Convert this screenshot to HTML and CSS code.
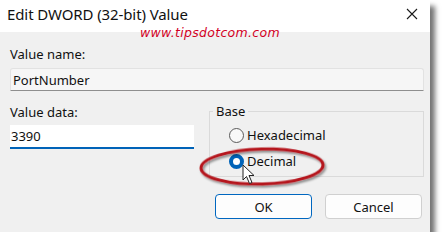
FILE: index.html
```html
<!DOCTYPE html>
<html>
<head>
<meta charset="utf-8">
<link rel="stylesheet" href="styles.css">
</head>
<body>
<div class="dialog">
  <div class="titlebar">
    <span class="title">Edit DWORD (32-bit) Value</span>
    <svg class="close" width="12" height="12" viewBox="0 0 12 12"><path d="M1 1 L11 11 M11 1 L1 11" stroke="#1a1a1a" stroke-width="1.1" fill="none"/></svg>
  </div>
  <div class="content">
    <div class="label first">Value name:</div>
    <div class="field readonly">PortNumber</div>
    <div class="row">
      <div class="col-left">
        <div class="label">Value data:</div>
        <div class="field edit">3390</div>
      </div>
      <fieldset class="group">
        <legend>Base</legend>
        <div class="radio"><span class="dot"></span><span>Hexadecimal</span></div>
        <div class="radio"><span class="dot on"></span><span>Decimal</span></div>
      </fieldset>
    </div>
    <div class="buttons">
      <div class="btn default">OK</div>
      <div class="btn">Cancel</div>
    </div>
  </div>
  <div class="watermark">www.tipsdotcom.com</div>
  <svg class="ellipse" width="140" height="52" viewBox="0 0 140 52">
    <defs>
      <filter id="sh" x="-10%" y="-20%" width="130%" height="160%">
        <feDropShadow dx="1.5" dy="2" stdDeviation="1.2" flood-color="#000" flood-opacity="0.45"/>
      </filter>
    </defs>
    <ellipse cx="69" cy="25.5" rx="61" ry="17.5" transform="rotate(-1.5 69 25.5)" fill="none" stroke="#b5121b" stroke-width="3" filter="url(#sh)"/>
  </svg>
  <svg class="cursor" width="14" height="22" viewBox="0 0 14 22">
    <path d="M1 1 L1 16 L4.5 12.5 L7.5 19.5 L10 18.5 L7 11.5 L12 11.5 Z" fill="#fff" stroke="#222" stroke-width="1" stroke-linejoin="round"/>
  </svg>
</div>
</body>
</html>
```

FILE: styles.css
```css
html, body {
  margin: 0;
  padding: 0;
  background: #ffffff;
}
body {
  font-family: "Noto Sans", "Open Sans", sans-serif;
  color: #111;
}
.dialog {
  position: relative;
  width: 430px;
  height: 232px;
  background: #f0f0f0;
  box-shadow: 5px 6px 5px rgba(0, 0, 0, 0.55);
  display: flex;
  flex-direction: column;
}
.titlebar {
  height: 32px;
  background: #fff;
  display: flex;
  align-items: center;
  justify-content: space-between;
  padding: 0 12px 0 7px;
  box-sizing: border-box;
}
.title {
  font-size: 15px;
  letter-spacing: -0.1px;
  margin-top: -4px;
}
.close {
  margin-top: -5px;
}
.content {
  padding: 0 6px 0 10px;
  display: flex;
  flex-direction: column;
}
.label {
  font-size: 13px;
  line-height: 18px;
  height: 18px;
}
.label.first {
  margin-top: 13px;
  margin-bottom: 3px;
}
.field {
  font-size: 13px;
  box-sizing: border-box;
  padding-left: 2px;
  display: flex;
  align-items: center;
}
.field.readonly {
  height: 23px;
  margin-top: 2px;
  background: #f6f6f6;
  border: 1px solid #e2e2e2;
  border-bottom: 1px solid #8e8e8e;
  border-radius: 3px 3px 0 0;
}
.row {
  display: flex;
  margin-top: 12px;
}
.col-left {
  width: 184px;
  display: flex;
  flex-direction: column;
}
.col-left .label {
  margin-bottom: 4px;
}
.field.edit {
  height: 24px;
  background: #fff;
  border-bottom: 2px solid #0063b8;
  padding-bottom: 1px;
  padding-left: 1px;
}
.group {
  margin: 0 0 0 15px;
  width: 215px;
  height: 74px;
  box-sizing: border-box;
  border: 1px solid #dadada;
  padding: 3px 0 0 19px;
}
.group legend {
  font-size: 13px;
  padding: 0 3px;
  margin-left: -16px;
  line-height: 16px;
}
.radio {
  display: flex;
  align-items: center;
  font-size: 13px;
  height: 26px;
  gap: 3px;
}
.dot {
  width: 15px;
  height: 15px;
  box-sizing: border-box;
  border-radius: 50%;
  border: 1px solid #5a5a5a;
  background: #f8f8f8;
  margin-left: 0;
}
.dot.on {
  border: 4.5px solid #0063b8;
  background: #fff;
}
.buttons {
  display: flex;
  justify-content: flex-end;
  gap: 13px;
  margin-top: 17px;
  padding-right: 2px;
}
.btn {
  width: 97px;
  height: 25px;
  box-sizing: border-box;
  border: 1px solid #d0d0d0;
  border-radius: 4px;
  background: #fdfdfd;
  font-size: 13px;
  display: flex;
  align-items: center;
  justify-content: center;
}
.btn.default {
  border: 1px solid #0067c0;
}
.watermark {
  position: absolute;
  left: 140px;
  top: 25px;
  font-family: "DejaVu Sans", sans-serif;
  font-style: italic;
  font-size: 12.5px;
  color: #d2001f;
  letter-spacing: 0.3px;
}
.ellipse {
  position: absolute;
  left: 193px;
  top: 141px;
}
.cursor {
  position: absolute;
  left: 242px;
  top: 164px;
}
```
